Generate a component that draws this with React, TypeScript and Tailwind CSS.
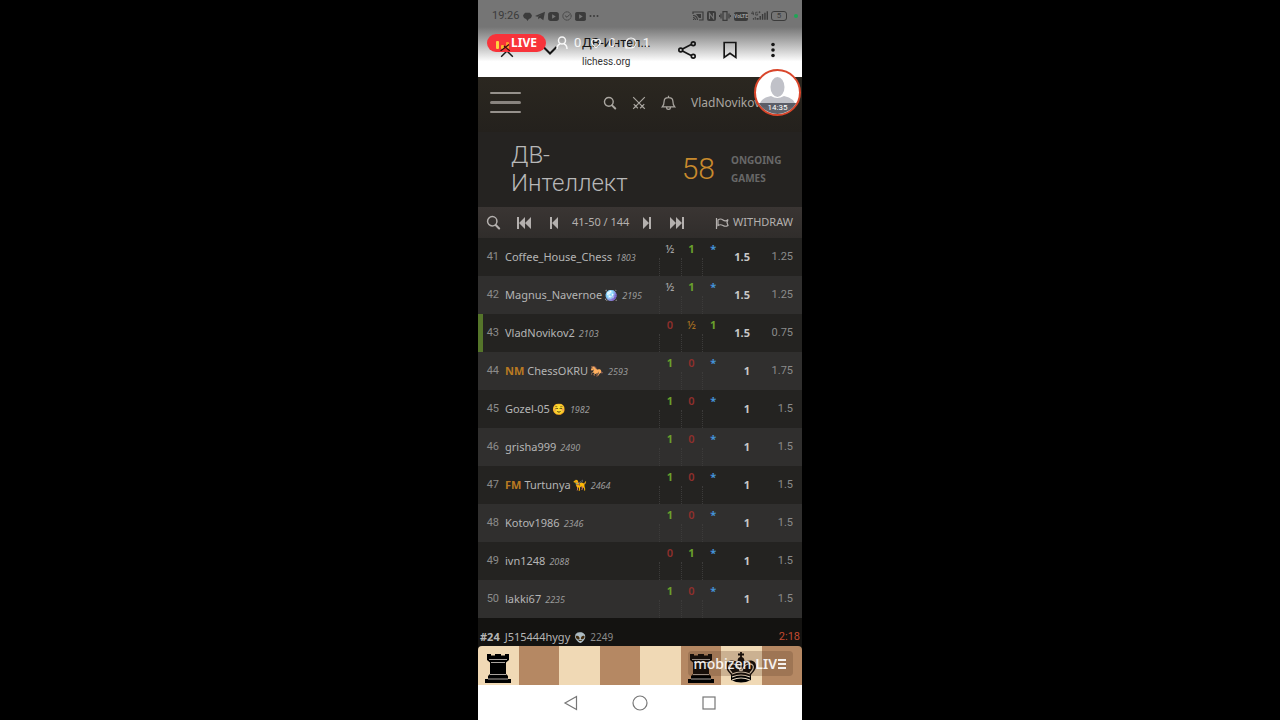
import type { ReactNode, SVGProps } from "react";

type Result = "½" | "1" | "0" | "*";

type Player = {
  rank: number;
  title?: string;
  name: string;
  flair?: string;
  rating: number;
  results: { value: Result; color: string }[];
  score: string;
  tieBreak: string;
  me?: boolean;
};

const GRAY = "font-medium text-[#a5a5a5]";
const GREEN = "font-bold text-[#6aa02c]";
const RED = "font-semibold text-[#8f2f2c]";
const BLUE = "font-bold text-[#4493d8]";
const GOLD = "font-medium text-[#a87022]";

const halfWin = [
  { value: "½" as const, color: GRAY },
  { value: "1" as const, color: GREEN },
  { value: "*" as const, color: BLUE },
];
const winLoss = [
  { value: "1" as const, color: GREEN },
  { value: "0" as const, color: RED },
  { value: "*" as const, color: BLUE },
];
const lossWin = [
  { value: "0" as const, color: RED },
  { value: "1" as const, color: GREEN },
  { value: "*" as const, color: BLUE },
];
const lossHalfWin = [
  { value: "0" as const, color: RED },
  { value: "½" as const, color: GOLD },
  { value: "1" as const, color: GREEN },
];

const players: Player[] = [
  { rank: 41, name: "Coffee_House_Chess", rating: 1803, results: halfWin, score: "1.5", tieBreak: "1.25" },
  { rank: 42, name: "Magnus_Navernoe", flair: "🪩", rating: 2195, results: halfWin, score: "1.5", tieBreak: "1.25" },
  { rank: 43, name: "VladNovikov2", rating: 2103, results: lossHalfWin, score: "1.5", tieBreak: "0.75", me: true },
  { rank: 44, title: "NM", name: "ChessOKRU", flair: "🐎", rating: 2593, results: winLoss, score: "1", tieBreak: "1.75" },
  { rank: 45, name: "Gozel-05", flair: "☺️", rating: 1982, results: winLoss, score: "1", tieBreak: "1.5" },
  { rank: 46, name: "grisha999", rating: 2490, results: winLoss, score: "1", tieBreak: "1.5" },
  { rank: 47, title: "FM", name: "Turtunya", flair: "🦮", rating: 2464, results: winLoss, score: "1", tieBreak: "1.5" },
  { rank: 48, name: "Kotov1986", rating: 2346, results: winLoss, score: "1", tieBreak: "1.5" },
  { rank: 49, name: "ivn1248", rating: 2088, results: lossWin, score: "1", tieBreak: "1.5" },
  { rank: 50, name: "lakki67", rating: 2235, results: winLoss, score: "1", tieBreak: "1.5" },
];

function Icon({ children, ...props }: SVGProps<SVGSVGElement>) {
  return (
    <svg
      viewBox="0 0 24 24"
      fill="none"
      stroke="currentColor"
      strokeWidth="2"
      aria-hidden="true"
      {...props}
    >
      {children}
    </svg>
  );
}

function IconButton({ label, className, children }: { label: string; className?: string; children: ReactNode }) {
  return (
    <button type="button" aria-label={label} className={`flex items-center justify-center ${className ?? ""}`}>
      {children}
    </button>
  );
}

function SearchIcon({ className }: { className: string }) {
  return (
    <Icon className={className} strokeWidth="2.4">
      <circle cx="10" cy="10" r="7.500" />
      <path d="M15.500 16l5.500 5.500" strokeWidth="3.400" strokeLinecap="round" />
    </Icon>
  );
}

function StatusBar() {
  return (
    <div className="flex h-8 items-center justify-between pl-[14px] pr-1 text-[#3b3b3b]">
      <div className="flex items-center gap-[3px]">
        <span className="font-[Roboto] text-[11px]">19:26</span>
        <svg viewBox="0 0 12 12" className="ml-px size-[9px]" fill="currentColor" aria-hidden="true">
          <path d="M3 1h6q2 1 3 4-1 3-3 4H8l-2 3-2-3H3Q1 8 0 5q1-3 3-4z" />
        </svg>
        <svg viewBox="0 0 12 12" className="size-[10px]" fill="currentColor" aria-hidden="true">
          <path d="M0 6L12 1l-2 10-4-3-2 2-.3-3L9 3.500 3 7z" />
        </svg>
        <svg viewBox="0 0 12 10" className="h-[9px] w-[11px]" aria-hidden="true">
          <rect width="12" height="10" rx="3" fill="currentColor" />
          <path d="M4.500 2.500v5L8.500 5z" fill="#757575" />
        </svg>
        <Icon viewBox="0 0 12 12" className="size-[10px]" strokeWidth="1">
          <circle cx="6" cy="6" r="5" strokeDasharray="2 .6" />
          <path d="M3.500 5.500L6 7.500 9.500 4" />
        </Icon>
        <svg viewBox="0 0 12 10" className="h-[9px] w-[11px]" aria-hidden="true">
          <rect width="12" height="10" rx="2" fill="currentColor" />
          <path d="M4.500 2.500v5L8.500 5z" fill="#757575" />
        </svg>
        <svg viewBox="0 0 10 4" className="h-1 w-[10px]" fill="currentColor" aria-hidden="true">
          <circle cx="1.500" cy="2" r="1" />
          <circle cx="5" cy="2" r="1" />
          <circle cx="8.500" cy="2" r="1" />
        </svg>
      </div>
      <div className="flex items-center gap-[3px]">
        <Icon viewBox="0 0 12 10" className="h-[10px] w-3" strokeWidth="1.200">
          <path d="M1 3V1h10v8H7M1 8.500h1M1 6.500q2 0 2.500 2.500M1 4.500q4 0 4.500 4.500" />
          <path d="M4 3h5v4H7z" fill="currentColor" stroke="none" />
        </Icon>
        <svg viewBox="0 0 9 10" className="h-[10px] w-[9px]" aria-hidden="true">
          <rect width="9" height="10" rx="2" fill="currentColor" />
          <path d="M2.500 8V2.500l4 5V2" fill="none" stroke="#757575" strokeWidth="1.200" />
        </svg>
        <Icon viewBox="0 0 12 10" className="h-[10px] w-3" strokeWidth="1.200">
          <path d="M4 .6h4v8.800H4zM2 2.500v5M10 2.500v5M.500 4v2M11.500 4v2" />
        </Icon>
        <span className="flex h-[9px] w-[14px] items-center justify-center rounded-xs bg-[#3b3b3b] font-[Roboto] text-[5px] leading-none font-bold text-[#a0a0a0]">
          VoLTE
        </span>
        <svg viewBox="0 0 18 12" className="h-3 w-[17px]" fill="currentColor" aria-hidden="true">
          <path d="M2 8h1v2H2zM4 7h1v3H4zM6 8h2v2H6zM9 6h1.500v4H9zM11.500 4H13v6h-1.500zM14 2.500h1.500V10H14zM16.500 1H18v9h-1.500z" />
          <path d="M2 1L.500 3.500H3M2.500 2v3M7 2H5v3h2V3.500M8 2h2M9 1v2" fill="none" stroke="currentColor" strokeWidth=".800" />
        </svg>
        <span className="flex h-[10px] w-4 items-center justify-center rounded-[3px] border border-[#3b3b3b] font-[Roboto] text-[8px] leading-none">
          5
        </span>
        <span className="ml-1 size-1 rounded-full bg-[#1fa655]" />
      </div>
    </div>
  );
}

function BrowserBar() {
  return (
    <div className="flex h-[45px] items-start text-[#151515]">
      <IconButton label="Close tab" className="ml-[22px] mt-3 size-[14px]">
        <Icon className="size-[14px]" strokeWidth="2.500">
          <path d="M2 2l20 20M22 2L2 22" />
        </Icon>
      </IconButton>
      <IconButton label="Collapse" className="ml-7 mt-3 h-3 w-4">
        <Icon viewBox="0 0 16 12" className="h-3 w-4" strokeWidth="2">
          <path d="M1.500 3L8 9.500 14.500 3" />
        </Icon>
      </IconButton>
      <div className="ml-6 flex min-w-0 flex-1 flex-col font-[Roboto]">
        <span className="mt-[3px] text-[13px] leading-4">ДВ-Интел...</span>
        <span className="mt-[3px] text-[10px] leading-4 text-[#333]">lichess.org</span>
      </div>
      <IconButton label="Share" className="mt-2 size-5">
        <Icon className="size-5" strokeWidth="2">
          <path d="M6 11l11-5.500M6 13l11 5.500" />
          <circle cx="4.500" cy="12" r="2.300" />
          <circle cx="19.500" cy="4.500" r="2.300" />
          <circle cx="19.500" cy="19.500" r="2.300" />
        </Icon>
      </IconButton>
      <IconButton label="Bookmark" className="ml-[23px] mt-2 size-5">
        <Icon className="size-5" strokeWidth="2">
          <path d="M5 3h14v18l-7-5-7 5z" />
        </Icon>
      </IconButton>
      <IconButton label="More" className="ml-[23px] mr-[19px] mt-2 size-5">
        <svg viewBox="0 0 20 20" className="size-5" fill="currentColor" aria-hidden="true">
          <circle cx="10" cy="4.500" r="1.800" />
          <circle cx="10" cy="10" r="1.800" />
          <circle cx="10" cy="15.500" r="1.800" />
        </svg>
      </IconButton>
    </div>
  );
}

function LivePill() {
  return (
    <div className="absolute left-[9px] top-[34px] flex h-[18px] w-[59px] items-center justify-center gap-px rounded-full bg-[#f8333a] font-['Noto_Sans'] text-xs font-bold text-white">
      <svg viewBox="0 0 14 12" className="mt-1 h-3 w-[14px]" aria-hidden="true">
        <rect x="0" y="2" width="3" height="8" rx="1" fill="#ffd23e" />
        <rect x="5" y="6" width="3" height="4" rx="1" fill="#ffb52e" />
        <rect x="10" y="3" width="3" height="7" rx="1" fill="#ff9a2e" />
        <path d="M4.500 12L13 5.500M8 7l6 5" stroke="#3a1010" strokeWidth="1.200" />
      </svg>
      LIVE
    </div>
  );
}

function LiveStats() {
  return (
    <div className="absolute left-[78px] top-[34px] flex h-[18px] items-center gap-[6px] font-[Roboto] text-[13px] text-white/90">
      <Icon viewBox="0 0 12 14" className="h-[14px] w-3" strokeWidth="1.500">
        <circle cx="6" cy="4.500" r="3.500" />
        <path d="M1 13q0-4 3-5M11 13q0-4-3-5" />
      </Icon>
      <span>0</span>
      <Icon viewBox="0 0 12 12" className="ml-[3px] size-3" strokeWidth="1.200">
        <path d="M6 10.500C-2 5 3 0 6 3.500 9 0 14 5 6 10.500z" />
      </Icon>
      <span>0</span>
      <Icon viewBox="0 0 12 12" className="ml-[3px] size-3" strokeWidth="1.200">
        <path d="M1 11V6a5 5 0 1 1 5 5z" />
      </Icon>
      <span>1</span>
    </div>
  );
}

function Avatar() {
  return (
    <div className="absolute right-px top-[69px] size-[47px] overflow-hidden rounded-full border-2 border-[#d9462b] bg-white">
      <svg viewBox="0 0 43 43" className="size-full" fill="#c0c1c8" aria-hidden="true">
        <ellipse cx="21.500" cy="16" rx="7" ry="10" />
        <path d="M3 36q1-9 12-11 6 4 13 0 11 2 12 11z" />
      </svg>
      <div className="absolute inset-x-0 bottom-0 h-[11px] bg-[#50525c]/90 text-center font-[Roboto] text-[8px] leading-[9px] text-white">
        14:35
      </div>
    </div>
  );
}

function SiteHeader() {
  return (
    <header className="flex h-[55px] items-center bg-linear-to-b from-[#2b2720] to-[#24211d] pb-1 pl-3 text-[#aaa6a0]">
      <IconButton label="Menu" className="w-[31px]">
        <span className="flex w-full flex-col gap-[7px]">
          <span className="h-[2px] rounded bg-[#96918c]" />
          <span className="h-[3px] rounded bg-[#89847f]" />
          <span className="h-[2px] rounded bg-[#96918c]" />
        </span>
      </IconButton>
      <div className="ml-auto flex items-center gap-[15px]">
        <IconButton label="Search">
          <SearchIcon className="size-[14px]" />
        </IconButton>
        <IconButton label="Challenges">
          <Icon className="size-[14px]" strokeWidth="2">
            <path d="M2 2l17 17M22 2L5 19M3 14l7 7M21 14l-7 7M2 22l4-4M22 22l-4-4" />
          </Icon>
        </IconButton>
        <IconButton label="Notifications">
          <Icon className="size-[15px]" strokeWidth="2">
            <path d="M2 19c3-3 3-5 3-9 0-4 3-6 7-6s7 2 7 6c0 4 0 6 3 9zM12 1v3M9 20q0 3 3 3t3-3" />
          </Icon>
        </IconButton>
        <a href="#profile" className="w-[111px] font-['Noto_Sans'] text-xs">
          VladNovikov2
        </a>
      </div>
    </header>
  );
}

function TitleBlock() {
  return (
    <section className="flex h-[75px] items-center bg-[#252321] pb-[2px] pl-[33px]">
      <h1 className="flex-1 font-[Roboto] text-2xl leading-7 font-light text-[#b8b8b8]">
        ДВ-
        <br />
        Интеллект
      </h1>
      <span className="font-[Roboto] text-[30px] font-light text-[#c88a2d]">58</span>
      <span className="ml-4 w-[71px] font-['Noto_Sans'] text-[10px] leading-[18px] font-bold text-[#686868]">
        ONGOING
        <br />
        GAMES
      </span>
    </section>
  );
}

function Pager() {
  return (
    <div className="flex h-[31px] items-center bg-linear-to-b from-[#3a3533] to-[#302d2b] pl-2 pr-[9px] text-[#b4b0ae]">
      <IconButton label="Find player">
        <SearchIcon className="size-[15px]" />
      </IconButton>
      <IconButton label="First page" className="ml-[15px]">
        <svg viewBox="0 0 16 14" className="h-[14px] w-4" fill="currentColor" aria-hidden="true">
          <path d="M1 1h2v12H1zM9 1v12L3 7zM15 1v12L9 7z" />
        </svg>
      </IconButton>
      <IconButton label="Previous page" className="ml-4">
        <svg viewBox="0 0 12 14" className="h-[14px] w-3" fill="currentColor" aria-hidden="true">
          <path d="M2 1h2v12H2zM10 1v12L4 7z" />
        </svg>
      </IconButton>
      <span className="ml-3 font-['Noto_Sans'] text-[11px]">41-50 / 144</span>
      <IconButton label="Next page" className="ml-3">
        <svg viewBox="0 0 12 14" className="h-[14px] w-3" fill="currentColor" aria-hidden="true">
          <path d="M8 1h2v12H8zM2 1v12l6-6z" />
        </svg>
      </IconButton>
      <IconButton label="Last page" className="ml-4">
        <svg viewBox="0 0 16 14" className="h-[14px] w-4" fill="currentColor" aria-hidden="true">
          <path d="M13 1h2v12h-2zM7 1v12l6-6zM1 1v12l6-6z" />
        </svg>
      </IconButton>
      <button type="button" className="ml-auto flex items-center gap-1 font-['Noto_Sans'] text-[11px]">
        <Icon viewBox="0 0 14 12" className="h-3 w-[14px]" strokeWidth="1.200">
          <path d="M1.500 1v11M3 3q2.500-2 5 0t5-.500l-1 3 1 3q-2.500 1.500-5 0T3 8.500z" />
        </Icon>
        WITHDRAW
      </button>
    </div>
  );
}

function Standings() {
  return (
    <table className="w-full table-fixed border-collapse font-['Noto_Sans']">
      <colgroup>
        <col className="w-[27px]" />
        <col />
        <col className="w-[65px]" />
        <col className="w-[26px]" />
        <col className="w-[52px]" />
      </colgroup>
      <tbody>
        {players.map((p) => (
          <tr key={p.rank} className="h-[38px] odd:bg-[#242321] even:bg-[#302f2e]">
            <td
              className={`p-0 pr-[6px] text-right font-[Roboto] text-[11px] text-[#8b8b8b] ${
                p.me ? "shadow-[inset_5px_0_0_#55752a]" : ""
              }`}
            >
              {p.rank}
            </td>
            <td className="p-0 text-[11px] whitespace-nowrap text-[#b5b5b5]">
              <a href={`#${p.name}`}>
                {p.title && <span className="mr-[3px] font-bold text-[#b97a22]">{p.title}</span>}
                {p.name}
                {p.flair && <span className="ml-[2px] text-[11px]">{p.flair}</span>}
              </a>
              <em className="ml-1 text-[9px] text-[#9b9b9b]">{p.rating}</em>
            </td>
            <td className="p-0">
              <div className="flex h-[38px]">
                {p.results.map((r, i) => (
                  <span key={i} className="flex flex-1 flex-col">
                    <span className={`h-5 text-center text-[11px] leading-[22px] ${r.color}`}>
                      {r.value}
                    </span>
                    <span className="flex-1 border-l border-dotted border-[#3c3b3a]" />
                  </span>
                ))}
              </div>
            </td>
            <td className="p-0 text-right text-[11px] font-bold text-[#c8c8c8]">{p.score}</td>
            <td className="p-0 pr-[9px] text-right font-[Roboto] text-[11px] text-[#8b8b8b]">{p.tieBreak}</td>
          </tr>
        ))}
      </tbody>
    </table>
  );
}

function Rook() {
  return (
    <svg viewBox="0 0 28 32" className="h-8 w-7 shrink-0" aria-hidden="true">
      <path
        d="M3 2h4v1.500h4V2h6v1.500h4V2h4v6l-3 2.500V22l2 2v3h3v4H1v-4h3v-3l2-2V10.500L3 8z"
        fill="#000"
      />
      <path d="M5 7.500h18M7 10.500h14M6 22.500h16M4 27h20" stroke="#a9a39e" strokeWidth="1" />
    </svg>
  );
}

function King() {
  return (
    <svg viewBox="0 0 32 32" className="size-8 shrink-0" aria-hidden="true">
      <path d="M16 0v6M13 2.500h6" stroke="#000" strokeWidth="1.800" />
      <path
        d="M16 5c3 0 4 3 3 6 4-4 12-3 12 3 0 4-3 6-5 9v5q-10 5-20 0v-5c-2-3-5-5-5-9 0-6 8-7 12-3-1-3 0-6 3-6z"
        fill="#000"
      />
      <path
        d="M16 19V13M7 21C1 15 4 11 9 12q5 2 6 7M25 21c6-6 3-10-2-9q-5 2-6 7M7 22q9-4 18 0M7 25q9-4 18 0M7 28q9-4 18 0"
        fill="none"
        stroke="#e4d4bd"
        strokeWidth="1.200"
      />
    </svg>
  );
}

const squares = ["rook", "", "", "", "", "rook", "king", ""];

function FeaturedGame() {
  return (
    <section className="relative bg-[#141311]">
      <div className="flex h-7 items-end gap-1 px-[2px] pb-px font-['Noto_Sans'] text-[11px] text-[#b5b5b5]">
        <b>#24</b>
        <span className="ml-px">J515444hygy</span>
        <span className="text-[10px]">👽</span>
        <span className="text-[10px] text-[#8b8b8b]">2249</span>
        <span className="ml-auto font-[Roboto] text-[#c34a30]">2:18</span>
      </div>
      <div className="grid h-[39px] grid-cols-8 overflow-hidden rounded-t">
        {squares.map((piece, i) => (
          <div
            key={i}
            className="flex items-center justify-center pt-1 odd:bg-[#f0d9b5] even:bg-[#b58863]"
          >
            {piece === "rook" && <Rook />}
            {piece === "king" && <King />}
          </div>
        ))}
      </div>
      <div className="absolute right-[9px] bottom-[9px] flex h-[25px] items-center rounded bg-[#5a3c28]/25 px-[6px] font-['Noto_Sans'] text-sm text-white/90">
        <span className="font-medium">mobizen</span>
        <span className="ml-1 font-semibold">LIV</span>
        <Icon viewBox="0 0 10 12" className="h-3 w-[10px]" strokeWidth="2">
          <path d="M1 2h8M1 6h8M1 10h8" />
        </Icon>
      </div>
    </section>
  );
}

function SystemNav() {
  return (
    <nav className="flex h-[35px] items-center justify-center gap-[53px] bg-white text-[#777]">
      <IconButton label="Back">
        <Icon viewBox="0 0 16 16" className="size-4" strokeWidth="1.200">
          <path d="M13.500 1.500v13L2 8z" />
        </Icon>
      </IconButton>
      <IconButton label="Home">
        <Icon viewBox="0 0 16 16" className="size-4" strokeWidth="1.200">
          <circle cx="8" cy="8" r="7" />
        </Icon>
      </IconButton>
      <IconButton label="Recent apps">
        <Icon viewBox="0 0 16 16" className="size-4" strokeWidth="1.200">
          <rect x="2" y="2" width="12" height="12" />
        </Icon>
      </IconButton>
    </nav>
  );
}

export default function App() {
  return (
    <div className="flex min-h-screen justify-center bg-black">
      <div className="relative w-full max-w-[324px]">
        <div className="bg-linear-to-b from-[#757575] from-35% to-white to-80%">
          <StatusBar />
          <BrowserBar />
        </div>
        <SiteHeader />
        <main>
          <TitleBlock />
          <Pager />
          <Standings />
          <FeaturedGame />
        </main>
        <SystemNav />
        <LivePill />
        <LiveStats />
        <Avatar />
      </div>
    </div>
  );
}
